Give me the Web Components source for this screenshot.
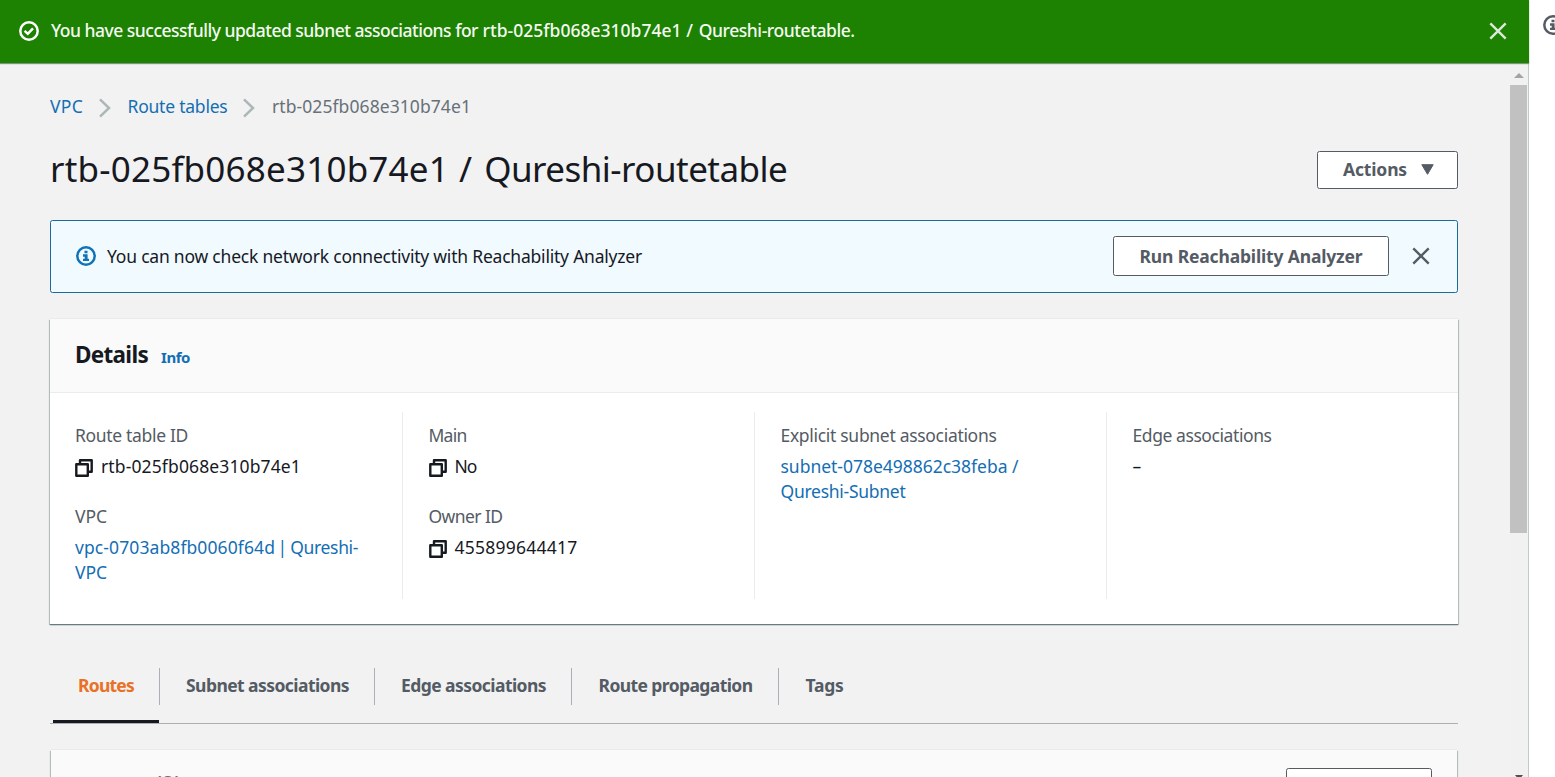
<!DOCTYPE html>
<html lang="en">
<head>
<meta charset="utf-8">
<title>Route table details</title>
<style>
html,body{margin:0;height:100%;overflow:hidden}
body{font:17.5px/25px "Noto Sans","Open Sans",sans-serif;color:#16191f;background:#fff}
</style>
</head>
<body>
<vpc-console></vpc-console>

<template id="vpc-console">
<style>
:host{display:flex;height:777px;width:1555px;overflow:hidden}
.main{width:1529px;flex:none;display:flex;flex-direction:column;background:#f2f2f2}
.body{flex:1;min-height:0;display:flex}
.content{flex:1;min-width:0;padding:31px 52px 0 50px;overflow:hidden}
.title{display:flex;justify-content:space-between;align-items:center;height:38px;margin-top:32px}
h1{margin:-2px 0 0;font-weight:400;font-size:35px;line-height:44px;white-space:nowrap}
.slash{margin-left:1px}
.help{flex:1;padding:15px 0 0 14px;background:#fff;overflow:hidden}
.help svg{display:block}
info-bar{margin-top:31px}
detail-card{margin-top:26px}
tab-bar{margin-top:36px}
.routes{margin:26px 1px 0}
</style>
<div class="main">
  <flash-bar><fit-text w="427">You have successfully updated subnet associations for</fit-text> <fit-text w="199">rtb-025fb068e310b74e1</fit-text> <fit-text w="8">/</fit-text> <fit-text w="156">Qureshi-routetable.</fit-text></flash-bar>
  <div class="body">
    <div class="content">
      <bread-crumbs></bread-crumbs>
      <div class="title"><h1><fit-text w="399">rtb-025fb068e310b74e1</fit-text> <fit-text class="slash" w="16">/</fit-text> <fit-text w="303">Qureshi-routetable</fit-text></h1>
        <aws-button style="width:141px;height:38px;padding:0 0 1px 2px;gap:14px"><fit-text w="64">Actions</fit-text><svg slot="icon" width="13" height="11" viewBox="0 0 13 11"><path d="M0.8 0.7h11.4L6.5 10.3z" fill="#545b64" stroke="#545b64" stroke-linejoin="round"/></svg></aws-button></div>
      <info-bar></info-bar>
      <detail-card>
        <fit-text slot="title" w="73">Details</fit-text><fit-text slot="info" w="29">Info</fit-text>
        <detail-grid></detail-grid>
      </detail-card>
      <tab-bar></tab-bar>
      <detail-card class="routes"><fit-text slot="title" w="72">Routes</fit-text><span slot="count">(2)</span><aws-button slot="action" style="width:146px;height:38px"><fit-text w="94">Edit routes</fit-text></aws-button></detail-card>
    </div>
    <scroll-bar></scroll-bar>
  </div>
</div>
<div class="help"><svg width="20" height="20" viewBox="0 0 20 20"><circle cx="10" cy="10" r="8.7" fill="none" stroke="#545b64" stroke-width="2.5"/><path d="M8.5 4.8h3v2.4h-3zM7 8.3h4.6v4.4H13V15H7v-2.3h1.7v-2H7z" fill="#545b64"/></svg></div>
</template>

<template id="fit-text"><style>:host{display:inline-block;white-space:nowrap}</style><slot></slot></template>

<template id="flash-bar">
<style>
:host{display:flex;align-items:center;height:63px;flex:none;padding:0 22px 1px 19px;background:#1d8102;color:#f4faf2;box-sizing:border-box;position:relative;box-shadow:0 1px 1px #78977a;font-weight:500}
.text{margin:-1px auto 0 12px;white-space:nowrap}
svg{display:block}
</style>
<svg width="20" height="20" viewBox="0 0 20 20" fill="none" stroke="#fff" stroke-width="2.5"><circle cx="10" cy="10" r="8.7"/><path d="M5.6 9.8l3.2 3 5.2-5.4"/></svg>
<div class="text"><slot></slot></div>
<svg width="18" height="18" viewBox="0 0 18 18" stroke="#dbe9d8" stroke-width="2.4"><path d="M1.3 1.3l15.4 15.4M16.7 1.3L1.3 16.7"/></svg>
</template>

<template id="bread-crumbs">
<style>
:host{display:flex;align-items:center;height:25px;color:#687078}
a{color:#146eb4}
svg{margin:2px 17px 0 15.5px}
</style>
<a><fit-text w="33">VPC</fit-text></a><svg width="12" height="20" viewBox="0 0 12 20" fill="none" stroke="#aab7b8" stroke-width="2.5"><path d="M1 1.3L10 10 1 18.7"/></svg>
<a><fit-text w="100">Route tables</fit-text></a><svg width="12" height="20" viewBox="0 0 12 20" fill="none" stroke="#aab7b8" stroke-width="2.5"><path d="M1 1.3L10 10 1 18.7"/></svg>
<fit-text w="199">rtb-025fb068e310b74e1</fit-text>
</template>

<template id="aws-button">
<style>
:host{display:inline-flex;align-items:center;justify-content:center;gap:15px;box-sizing:border-box;border:1px solid #545b64;border-radius:2.5px;background:#fff;color:#545b64;font-weight:700}
</style><slot></slot><slot name="icon"></slot>
</template>

<template id="info-bar">
<style>
:host{display:flex;align-items:center;height:73px;box-sizing:border-box;border:1px solid #196b9e;border-radius:2.5px;background:#f1faff;padding:0 27px 1px 25px}
fit-text.msg{margin:0 auto 0 11px}
.x{margin-left:23px}
</style>
<svg width="20" height="20" viewBox="0 0 20 20"><circle cx="10" cy="10" r="8.7" fill="none" stroke="#0f73b7" stroke-width="2.5"/><path d="M8.5 4.8h3v2.4h-3zM7 8.3h4.6v4.4H13V15H7v-2.3h1.7v-2H7z" fill="#0f73b7"/></svg>
<fit-text class="msg" w="535">You can now check network connectivity with Reachability Analyzer</fit-text>
<aws-button style="width:276px;height:40px"><fit-text w="223">Run Reachability Analyzer</fit-text></aws-button>
<svg class="x" width="18" height="18" viewBox="0 0 18 18" stroke="#545b64" stroke-width="2.4"><path d="M1.3 1.3l15.4 15.4M16.7 1.3L1.3 16.7"/></svg>
</template>

<template id="detail-card">
<style>
:host{display:block;background:#fff;box-shadow:0 1px 1px #687c7d,1px 1px 1px #c4caca,-1px 1px 1px #c4caca,0 -1px 0 #e9ebeb}
header{display:flex;align-items:baseline;height:74px;box-sizing:border-box;padding:20px 25px 0 25px;background:#fafafa;border-bottom:1px solid #eaeded}
.t{font-weight:700;font-size:22.5px;line-height:32px}
.i{font-weight:700;font-size:15px;line-height:20px;color:#146eb4;margin-left:13px}
.c{font-size:22.5px;line-height:32px;color:#687078;margin-left:-6px;margin-top:-2px;align-self:flex-start}
.a{margin:0 0 0 auto;align-self:flex-start;margin-top:-2px}
</style>
<header><div class="t"><slot name="title"></slot></div><div class="i"><slot name="info"></slot></div><div class="c"><slot name="count"></slot></div><div class="a"><slot name="action"></slot></div></header>
<slot></slot>
</template>

<template id="detail-field">
<style>
:host{display:block;height:81px}
.l{color:#545b64;height:25px;margin-bottom:6px}
.v{display:flex;align-items:center;gap:8px;line-height:25px;white-space:nowrap}
:host([link]) .v{color:#146eb4;display:block}
svg{display:none;margin-top:2px}
:host([copy]) svg{display:block}
</style>
<div class="l"><slot name="label"></slot></div>
<div class="v"><svg width="18" height="18" viewBox="0 0 18 18" fill="none" stroke="#16191f" stroke-width="2.4" stroke-linejoin="round"><path d="M5 5V1.3h11.7v11.5H13M1.3 5.2h11.5v11.5H1.3z"/></svg><div><slot></slot></div></div>
</template>

<template id="detail-grid">
<style>
:host{display:grid;grid-template-columns:353px 352px 352px 1fr;height:231px;box-sizing:border-box;padding:19px 0 25px}
section{box-sizing:border-box;border-right:1px solid #eaeded;padding:11px 0 0 25.5px}
section:first-of-type{padding-left:25px}
section:last-child{border:0}
.bar{margin-left:-2px;margin-right:2px}
</style>
<section>
<detail-field copy><fit-text slot="label" w="113">Route table ID</fit-text><fit-text w="200">rtb-025fb068e310b74e1</fit-text></detail-field>
<detail-field link><fit-text slot="label" w="32">VPC</fit-text><fit-text w="200">vpc-0703ab8fb0060f64d</fit-text> <fit-text class="bar" w="6">|</fit-text> <fit-text w="68">Qureshi-</fit-text><br><fit-text w="32">VPC</fit-text></detail-field>
</section>
<section>
<detail-field copy><fit-text slot="label" w="38">Main</fit-text><fit-text w="22">No</fit-text></detail-field>
<detail-field copy><fit-text slot="label" w="74">Owner ID</fit-text><fit-text w="123">455899644417</fit-text></detail-field>
</section>
<section>
<detail-field link><fit-text slot="label" w="216">Explicit subnet associations</fit-text><fit-text w="227">subnet-078e498862c38feba</fit-text> <fit-text w="7">/</fit-text><br><fit-text w="125">Qureshi-Subnet</fit-text></detail-field>
</section>
<section>
<detail-field><fit-text slot="label" w="139">Edge associations</fit-text>–</detail-field>
</section>
</template>

<template id="tab-bar">
<style>
:host{display:flex;height:64px;box-sizing:border-box;border-bottom:1px solid #aab0b3;padding:0 0 0 3px;font-weight:700;color:#545b64}
div{height:37px;margin-top:8px;box-sizing:border-box;border-right:1px solid #aab0b3;display:flex;align-items:center;justify-content:center;padding:0 0 2px 1px}
.on{color:#e97125;position:relative;width:107px;padding-left:0}
.on::after{content:"";position:absolute;left:0;top:52px;width:106px;height:3px;background:#16191f}
div:last-child{border:0}
</style>
<div class="on"><fit-text w="56">Routes</fit-text></div>
<div style="width:215px"><fit-text w="163">Subnet associations</fit-text></div>
<div style="width:197px"><fit-text w="145">Edge associations</fit-text></div>
<div style="width:207px"><fit-text w="154">Route propagation</fit-text></div>
<div style="width:90px"><fit-text w="38">Tags</fit-text></div>
</template>

<template id="scroll-bar">
<style>
:host{display:flex;flex-direction:column;align-items:center;width:17px;padding-right:1px;border-right:1px solid #c3c8c8;background:#f1f1f1;flex:none;overflow:hidden}
.up{margin-top:10px;width:0;border:5px solid transparent;border-top:0;border-bottom-color:#a3a3a3}
.thumb{width:17px;height:448px;background:#c1c1c1;margin-top:7px;flex:none}
.down{width:0;margin-top:auto;margin-bottom:-3px;border:4px solid transparent;border-bottom:0;border-top:5px solid #505050}
</style>
<div class="up"></div><div class="thumb"></div><div class="down"></div>
</template>

<script>
const fits = [];
function define(name, extra) {
  customElements.define(name, class extends HTMLElement {
    constructor() {
      super();
      this.attachShadow({mode: "open"}).append(document.getElementById(name).content.cloneNode(true));
      if (extra) extra(this);
    }
  });
}
// Labels with a w attribute are tracked to that width by letter spacing.
define("fit-text", el => fits.push(el));
["aws-button", "flash-bar", "bread-crumbs", "info-bar", "detail-field", "detail-card", "detail-grid", "tab-bar", "scroll-bar", "vpc-console"].forEach(n => define(n));
customElements.upgrade(document.body);
for (const el of fits) {
  if (!el.isConnected) continue;
  const w = +el.getAttribute("w");
  const n = el.textContent.length;
  el.style.letterSpacing = (w - el.getBoundingClientRect().width) / n + "px";
}
</script>
</body>
</html>
